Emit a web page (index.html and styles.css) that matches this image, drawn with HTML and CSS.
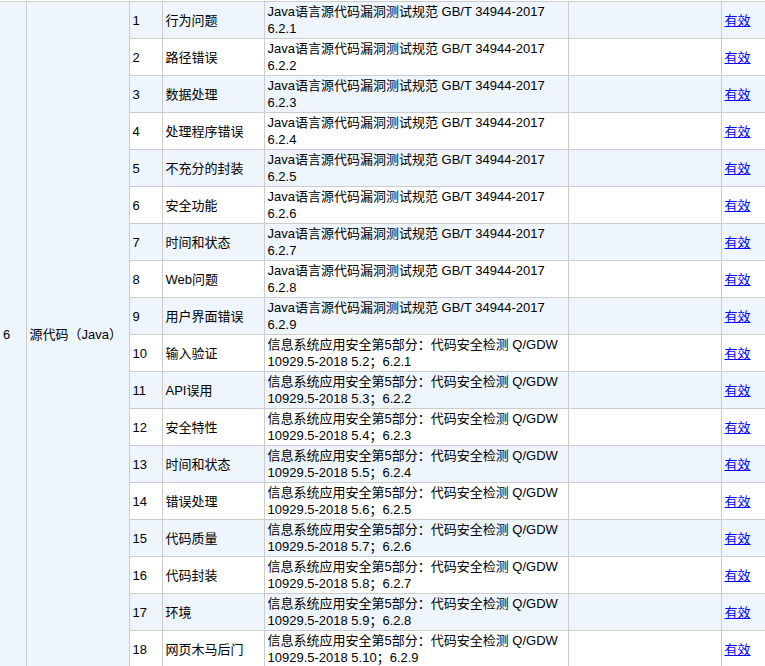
FILE: index.html
```html
<!DOCTYPE html>
<html lang="zh-CN">
<head>
<meta charset="utf-8">
<title>检测规范</title>
<link rel="stylesheet" href="styles.css">
</head>
<body>
<table class="spec">
  <colgroup>
    <col class="c-idx">
    <col class="c-type">
    <col class="c-no">
    <col class="c-name">
    <col class="c-std">
    <col class="c-note">
    <col class="c-state">
  </colgroup>
  <tbody>
    <tr class="odd">
      <td class="group" rowspan="18">6</td>
      <td class="group nowrap" rowspan="18">源代码（Java）</td>
      <td>1</td><td>行为问题</td><td>Java语言源代码漏洞测试规范 GB/T 34944-2017 6.2.1</td><td></td><td><a href="#">有效</a></td>
    </tr>
    <tr class="even"><td>2</td><td>路径错误</td><td>Java语言源代码漏洞测试规范 GB/T 34944-2017 6.2.2</td><td></td><td><a href="#">有效</a></td></tr>
    <tr class="odd"><td>3</td><td>数据处理</td><td>Java语言源代码漏洞测试规范 GB/T 34944-2017 6.2.3</td><td></td><td><a href="#">有效</a></td></tr>
    <tr class="even"><td>4</td><td>处理程序错误</td><td>Java语言源代码漏洞测试规范 GB/T 34944-2017 6.2.4</td><td></td><td><a href="#">有效</a></td></tr>
    <tr class="odd"><td>5</td><td>不充分的封装</td><td>Java语言源代码漏洞测试规范 GB/T 34944-2017 6.2.5</td><td></td><td><a href="#">有效</a></td></tr>
    <tr class="even"><td>6</td><td>安全功能</td><td>Java语言源代码漏洞测试规范 GB/T 34944-2017 6.2.6</td><td></td><td><a href="#">有效</a></td></tr>
    <tr class="odd"><td>7</td><td>时间和状态</td><td>Java语言源代码漏洞测试规范 GB/T 34944-2017 6.2.7</td><td></td><td><a href="#">有效</a></td></tr>
    <tr class="even"><td>8</td><td>Web问题</td><td>Java语言源代码漏洞测试规范 GB/T 34944-2017 6.2.8</td><td></td><td><a href="#">有效</a></td></tr>
    <tr class="odd"><td>9</td><td>用户界面错误</td><td>Java语言源代码漏洞测试规范 GB/T 34944-2017 6.2.9</td><td></td><td><a href="#">有效</a></td></tr>
    <tr class="even"><td>10</td><td>输入验证</td><td>信息系统应用安全第5部分：代码安全检测 Q/GDW 10929.5-2018 5.2；6.2.1</td><td></td><td><a href="#">有效</a></td></tr>
    <tr class="odd"><td>11</td><td>API误用</td><td>信息系统应用安全第5部分：代码安全检测 Q/GDW 10929.5-2018 5.3；6.2.2</td><td></td><td><a href="#">有效</a></td></tr>
    <tr class="even"><td>12</td><td>安全特性</td><td>信息系统应用安全第5部分：代码安全检测 Q/GDW 10929.5-2018 5.4；6.2.3</td><td></td><td><a href="#">有效</a></td></tr>
    <tr class="odd"><td>13</td><td>时间和状态</td><td>信息系统应用安全第5部分：代码安全检测 Q/GDW 10929.5-2018 5.5；6.2.4</td><td></td><td><a href="#">有效</a></td></tr>
    <tr class="even"><td>14</td><td>错误处理</td><td>信息系统应用安全第5部分：代码安全检测 Q/GDW 10929.5-2018 5.6；6.2.5</td><td></td><td><a href="#">有效</a></td></tr>
    <tr class="odd"><td>15</td><td>代码质量</td><td>信息系统应用安全第5部分：代码安全检测 Q/GDW 10929.5-2018 5.7；6.2.6</td><td></td><td><a href="#">有效</a></td></tr>
    <tr class="even"><td>16</td><td>代码封装</td><td>信息系统应用安全第5部分：代码安全检测 Q/GDW 10929.5-2018 5.8；6.2.7</td><td></td><td><a href="#">有效</a></td></tr>
    <tr class="odd"><td>17</td><td>环境</td><td>信息系统应用安全第5部分：代码安全检测 Q/GDW 10929.5-2018 5.9；6.2.8</td><td></td><td><a href="#">有效</a></td></tr>
    <tr class="even"><td>18</td><td>网页木马后门</td><td>信息系统应用安全第5部分：代码安全检测 Q/GDW 10929.5-2018 5.10；6.2.9</td><td></td><td><a href="#">有效</a></td></tr>
  </tbody>
</table>
</body>
</html>
```

FILE: styles.css
```css
html, body {
  margin: 0;
  padding: 0;
  background: #ffffff;
}

body {
  font-family: "Liberation Sans", Arial, "Noto Sans CJK SC", sans-serif;
  font-size: 13px;
  line-height: 17px;
  color: #000000;
  overflow: hidden;
}

.spec {
  border-collapse: collapse;
  table-layout: fixed;
  width: 826px;
  margin-top: 1px;
}

.c-idx { width: 26px; }
.c-type { width: 103px; }
.c-no { width: 33px; }
.c-name { width: 102px; }
.c-std { width: 304px; }
.c-note { width: 153px; }
.c-state { width: 105px; }

.spec td {
  border: 1px solid #cccccc;
  padding: 1px 3px;
  height: 34px;
  vertical-align: middle;
  text-align: left;
}

.spec td.group {
  border-left: none;
  background: #eef5fd;
}

.spec td.group + td.group {
  border-left: 1px solid #cccccc;
}

.nowrap {
  white-space: nowrap;
}

.odd td {
  background: #eef5fd;
}

.even td {
  background: #ffffff;
}

.spec tr td.group {
  background: #eef5fd;
}

.spec a {
  color: #0000ff;
  text-decoration: underline;
}
```
